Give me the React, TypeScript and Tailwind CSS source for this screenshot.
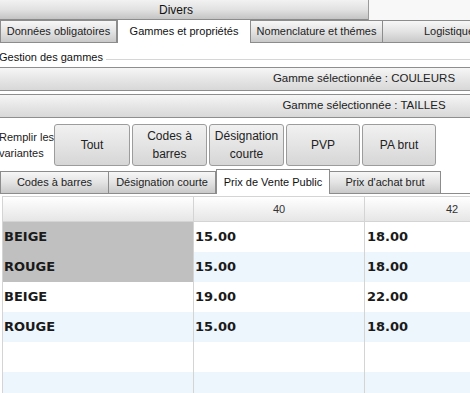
import React from 'react';

const font = { fontFamily: '"Liberation Sans", Arial, sans-serif' };

const topTabs = [
  { label: 'Données obligatoires', w: 'w-[117px]', active: false },
  { label: 'Gammes et propriétés', w: 'w-[134px]', active: true },
  { label: 'Nomenclature et thémes', w: 'w-[133px]', active: false },
  { label: 'Logistique', w: 'w-[134px]', active: false },
];

const priceTabs = [
  { label: 'Codes à barres', w: 'w-[109px]', active: false },
  { label: 'Désignation courte', w: 'w-[108px]', active: false },
  { label: 'Prix de Vente Public', w: 'w-[114px]', active: true },
  { label: "Prix d'achat brut", w: 'w-[112px]', active: false },
];

const buttons = [
  { label: 'Tout', w: 'w-[76px]' },
  { label: 'Codes à\nbarres', w: 'w-[75px]' },
  { label: 'Désignation\ncourte', w: 'w-[75px]' },
  { label: 'PVP', w: 'w-[74px]' },
  { label: 'PA brut', w: 'w-[74px]' },
];

const rows = [
  { name: 'BEIGE', a: '15.00', b: '18.00', selected: true },
  { name: 'ROUGE', a: '15.00', b: '18.00', selected: true },
  { name: 'BEIGE', a: '19.00', b: '22.00', selected: false },
  { name: 'ROUGE', a: '15.00', b: '18.00', selected: false },
  { name: '', a: '', b: '', selected: false },
  { name: '', a: '', b: '', selected: false },
];

function Tab({ label, w, active }: { label: string; w: string; active: boolean }) {
  if (active) {
    return (
      <div className={`${w} shrink-0 h-full flex items-center justify-center bg-white border border-b-0 border-[#8c8c8c] text-[#111]`}>
        {label}
      </div>
    );
  }
  return (
    <div
      className={`${w} shrink-0 h-[23px] flex items-center justify-center border border-[#8c8c8c] -ml-px first:ml-0 bg-linear-to-b from-[#f7f7f7] via-[#e3e3e3] to-[#c9c9c9] text-[#222] whitespace-nowrap`}
    >
      {label}
    </div>
  );
}

export default function App() {
  return (
    <div className="w-[470px] h-[393px] overflow-hidden bg-white text-[11px] text-[#111] flex flex-col" style={font}>
      {/* Divers */}
      <div className="flex h-[20px] shrink-0">
        <div className="w-[368px] shrink-0 flex items-center justify-center pr-4 bg-linear-to-b from-[#f2f2f2] via-[#e2e2e2] to-[#c4c4c4] border-b border-[#8a8a8a] text-[12px]">
          Divers
        </div>
        <div className="flex-1 bg-[#f8f8f8] border-l border-[#9a9a9a]" />
      </div>

      {/* main tabs */}
      <div className="flex items-end h-[24px] shrink-0 -mt-px whitespace-nowrap overflow-hidden">
        {topTabs.map((t) => (
          <Tab key={t.label} {...t} />
        ))}
      </div>

      {/* group box header */}
      <div className="flex items-start h-[24px] shrink-0 pt-[7px] -ml-[1px]">
        <span className="leading-[14px] text-[11px]">Gestion des gammes</span>
        <div className="flex-1 h-px bg-[#d6d6d6] mt-[9px] ml-[3px]" />
      </div>

      {/* selected ranges */}
      <div className="flex flex-col gap-[3px] shrink-0 overflow-hidden">
        {['Gamme sélectionnée : COULEURS', 'Gamme sélectionnée : TAILLES'].map((g) => (
          <div
            key={g}
            className="w-[728px] h-[24px] flex items-center justify-center border-y border-[#8e8e8e] bg-linear-to-b from-[#f6f6f6] via-[#e6e6e6] to-[#d8d8d8] text-[11.5px] text-[#222]"
          >
            {g}
          </div>
        ))}
      </div>

      {/* fill buttons */}
      <div className="flex items-center h-[42px] mt-[6px] shrink-0">
        <div className="w-[55px] shrink-0 -ml-[1px] text-[11px] leading-[16px] text-[#222] whitespace-nowrap">
          Remplir les
          <br />
          variantes
        </div>
        <div className="flex gap-[2px]">
          {buttons.map((b) => (
            <div
              key={b.label}
              className={`${b.w} h-[42px] rounded-[3px] border border-[#9c9c9c] flex items-center justify-center text-center whitespace-pre-line text-[12px] leading-[18px] text-[#222] bg-linear-to-b from-[#f1f1f1] via-[#e4e4e4] to-[#d6d6d6]`}
            >
              {b.label}
            </div>
          ))}
        </div>
      </div>

      {/* price tabs */}
      <div className="flex items-end h-[25px] mt-[3px] shrink-0 whitespace-nowrap">
        {priceTabs.map((t) => (
          <Tab key={t.label} {...t} />
        ))}
        <div className="flex-1 h-[23px] border-b border-[#8c8c8c]" />
      </div>

      {/* grid */}
      <div className="ml-[2px] mt-[2px] flex-1 border-l border-t border-[#d4d4d4] overflow-hidden">
        <div className="flex h-[25px] border-b border-[#d4d4d4] bg-linear-to-b from-[#ffffff] to-[#e6e6e6] text-[11px] text-[#333]">
          <div className="w-[191px] shrink-0 border-r border-[#d4d4d4]" />
          <div className="w-[171px] shrink-0 border-r border-[#d4d4d4] flex items-center justify-center">40</div>
          <div className="w-[174px] shrink-0 flex items-center justify-center">42</div>
        </div>
        {rows.map((r, i) => (
          <div
            key={i}
            className={`flex h-[30px] text-[13px] text-[#1a1a1a] ${i % 2 === 1 ? 'bg-[#edf5fd]' : 'bg-white'}`}
            style={{ fontFamily: '"DejaVu Sans", Verdana, sans-serif', fontWeight: r.selected ? 700 : 600 }}
          >
            <div
              className={`w-[191px] shrink-0 border-r border-[#d4d4d4] flex items-center pl-[1px] ${r.selected ? 'bg-[#c0c0c0]' : ''}`}
            >
              {r.name}
            </div>
            <div className="w-[171px] shrink-0 border-r border-[#d4d4d4] flex items-center pl-[1px]">{r.a}</div>
            <div className="flex-1 flex items-center pl-[2px]">{r.b}</div>
          </div>
        ))}
      </div>
    </div>
  );
}
